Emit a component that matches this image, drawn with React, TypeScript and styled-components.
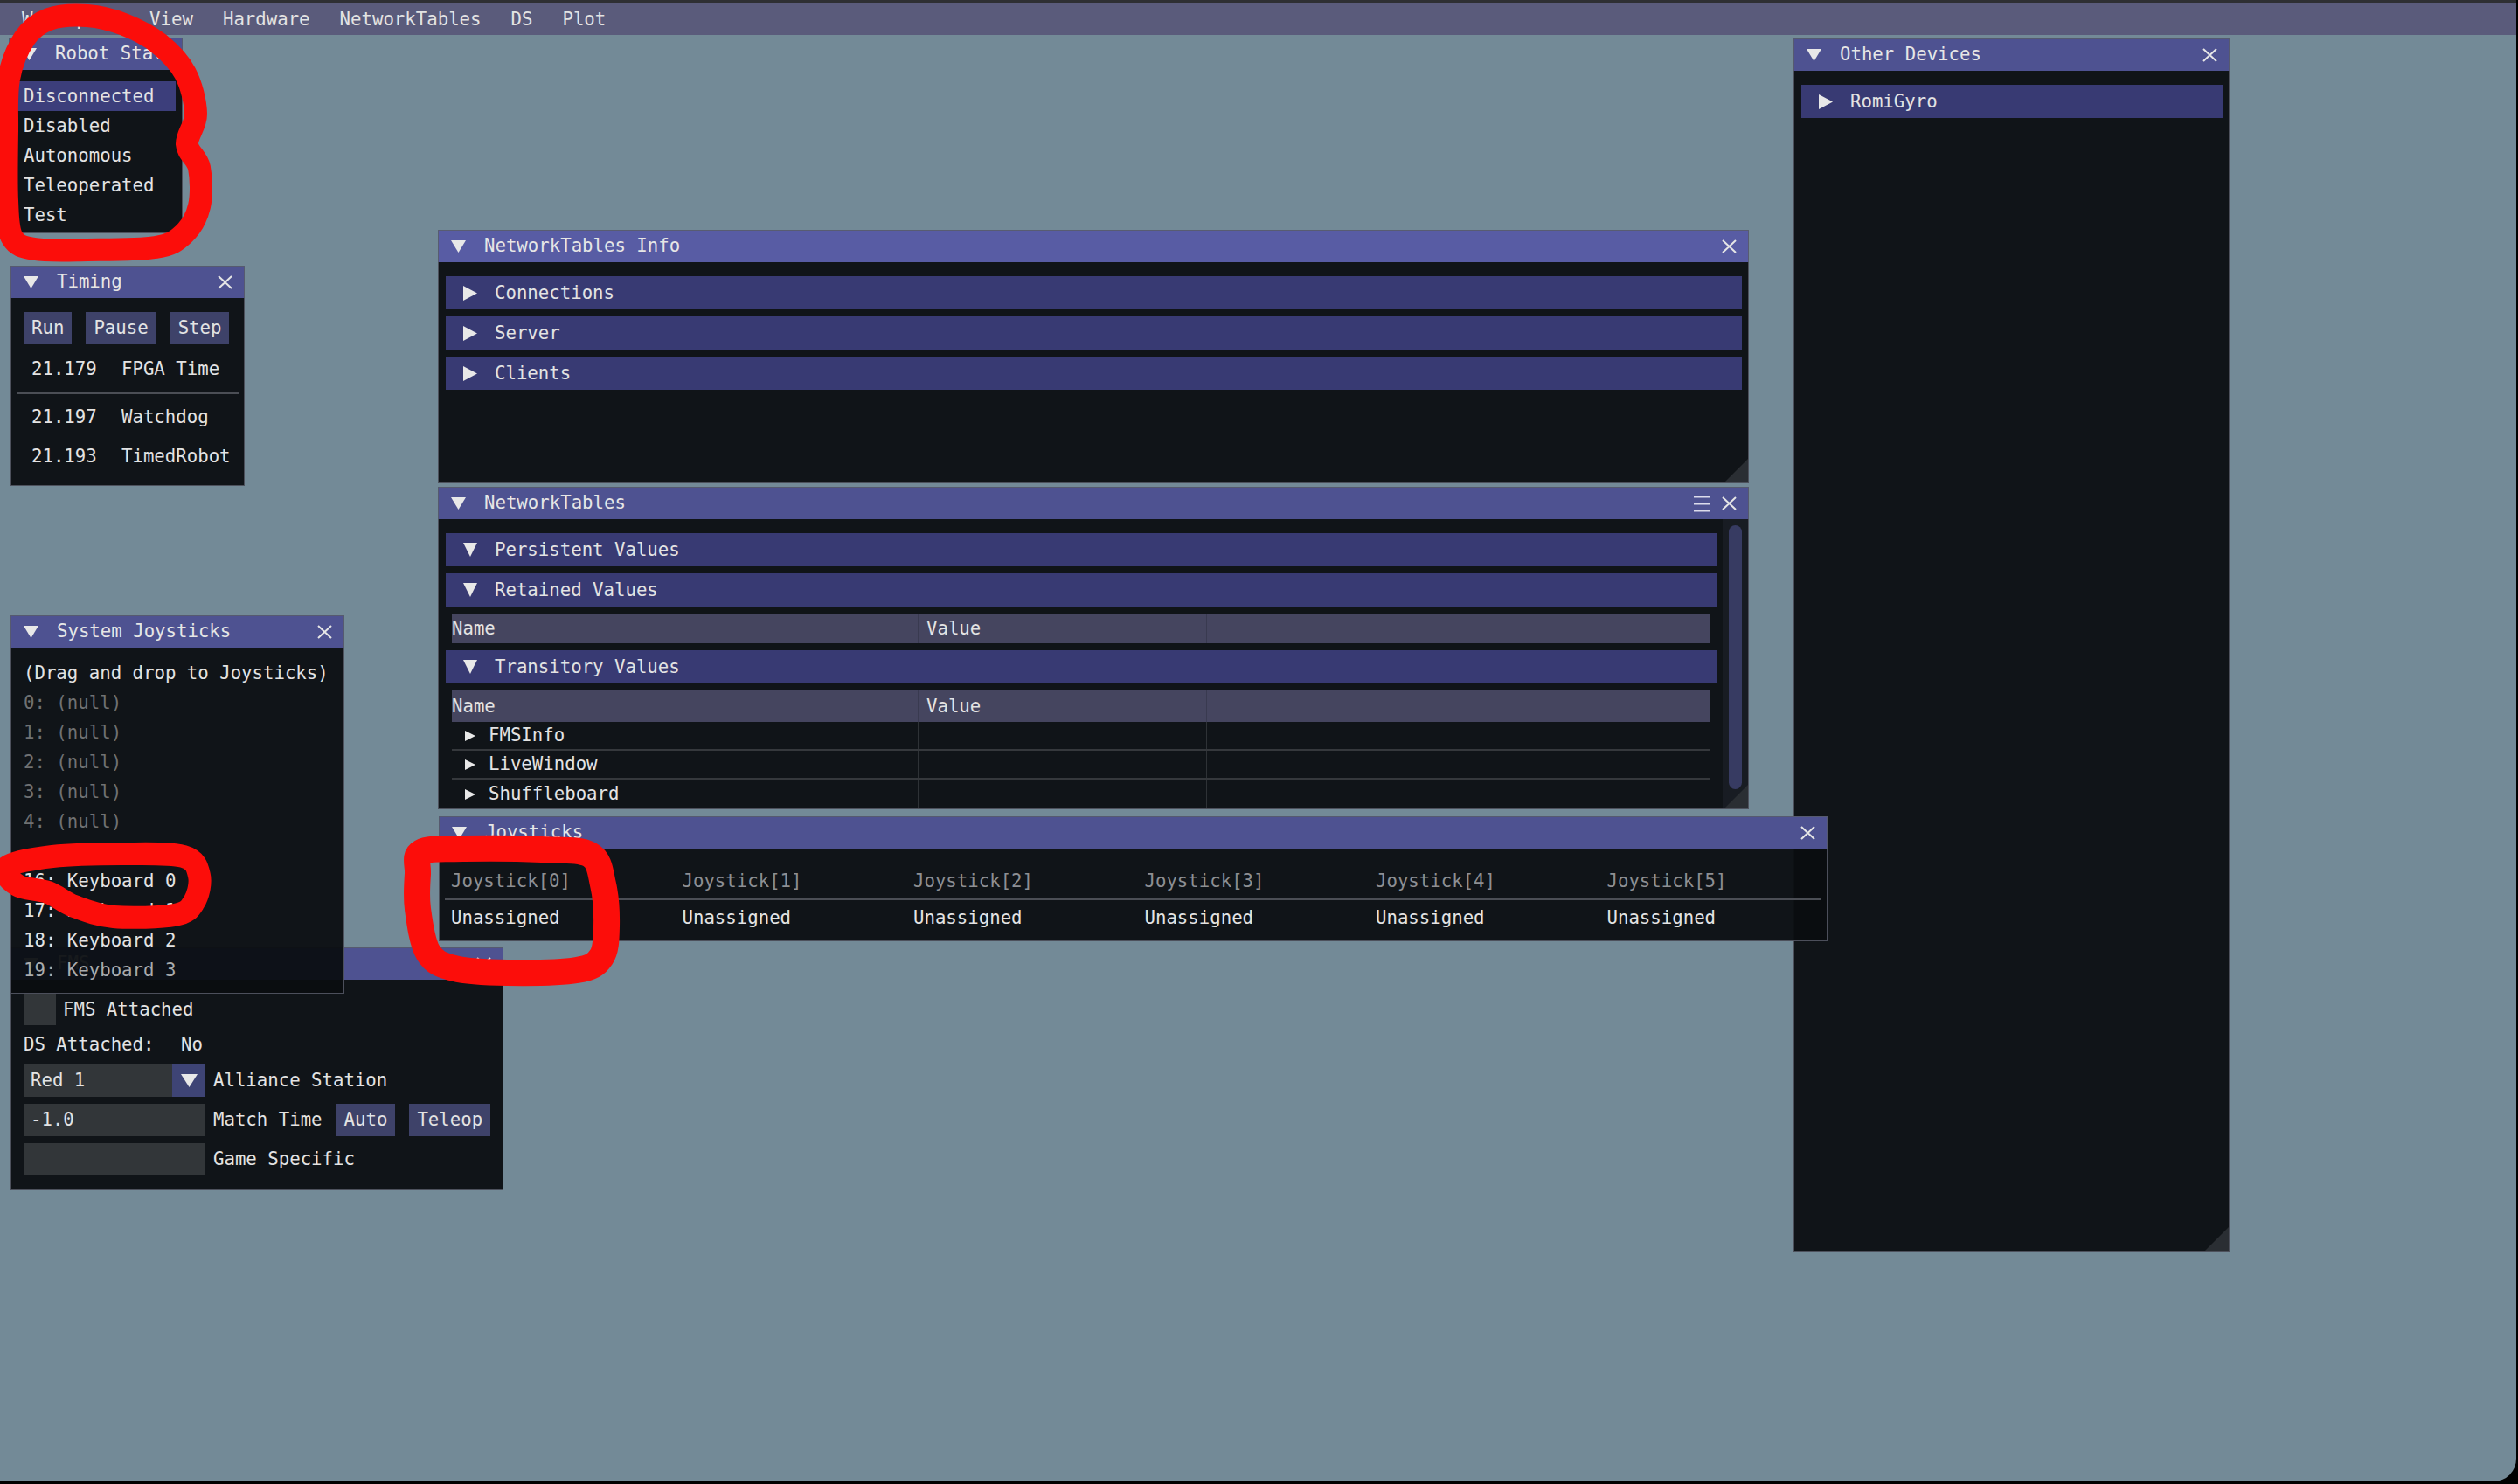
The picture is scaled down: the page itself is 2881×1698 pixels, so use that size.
import React from "react";
import styled, { createGlobalStyle, css } from "styled-components";

const GlobalStyle = createGlobalStyle`
  *, *::before, *::after { box-sizing: border-box; }
  html, body { margin: 0; padding: 0; background: #000; }
  body { font-family: "DejaVu Sans Mono", "Liberation Mono", monospace; }
`;

const TEXT = "#e3e3e3";
const DIM = "#6f7173";

const Screen = styled.div`
  position: relative;
  width: 2879px;
  height: 1695px;
  background: #738a97;
  border-bottom-right-radius: 26px;
  overflow: hidden;
  font-family: "DejaVu Sans Mono", "Liberation Mono", monospace;
  font-size: 20.7px;
  line-height: 1.2;
  color: ${TEXT};
  display: flex;
  flex-direction: column;
`;

const TopStrip = styled.div`
  height: 4px;
  flex: none;
  background: #2e2f33;
`;

const MenuBar = styled.div`
  height: 36px;
  flex: none;
  background: #5a5b7b;
  display: flex;
  align-items: center;
  padding-left: 8px;
`;

const MenuItem = styled.span`
  padding: 0 17px;
  white-space: nowrap;
`;

const Win = styled.div<{ $x: number; $y: number; $w: number; $h: number; $z?: number }>`
  position: absolute;
  left: ${(p) => p.$x}px;
  top: ${(p) => p.$y}px;
  width: ${(p) => p.$w}px;
  height: ${(p) => p.$h}px;
  z-index: ${(p) => p.$z ?? 1};
  background: rgba(10, 13, 16, 0.94);
  display: flex;
  flex-direction: column;
  overflow: hidden;
  &::after {
    content: "";
    position: absolute;
    inset: 0;
    border: 1px solid rgba(88, 92, 104, 0.85);
    pointer-events: none;
  }
`;

const TitleBar = styled.div<{ $active?: boolean }>`
  height: 37px;
  flex: none;
  background: ${(p) => (p.$active ? "#585ca4" : "#4e5291")};
  display: flex;
  align-items: center;
  padding: 0 14px 0 15px;
  color: #e6e6e6;
`;

const TitleText = styled.span<{ $clip?: number }>`
  margin-left: 21px;
  flex: 1;
  line-height: 37px;
  white-space: nowrap;
  overflow: hidden;
  ${(p) =>
    p.$clip &&
    css`
      flex: none;
      width: ${p.$clip}px;
    `}
`;

const TitleIcons = styled.div`
  display: flex;
  align-items: center;
  gap: 14px;
`;

const Grip = styled.div`
  position: absolute;
  right: 1px;
  bottom: 1px;
  width: 27px;
  height: 27px;
  background: #2a2e33;
  clip-path: polygon(100% 0, 100% 100%, 0 100%);
  z-index: 2;
`;

/* ---------- icons ---------- */
const TriDown = ({ w = 17, h = 14 }: { w?: number; h?: number }) => (
  <svg width={w} height={h} viewBox={`0 0 ${w} ${h}`} style={{ flex: "none" }}>
    <polygon points={`0,0 ${w},0 ${w / 2},${h}`} fill="#e8e8e8" />
  </svg>
);

const TriRight = ({ w = 16, h = 17 }: { w?: number; h?: number }) => (
  <svg width={w} height={h} viewBox={`0 0 ${w} ${h}`} style={{ flex: "none" }}>
    <polygon points={`0,0 ${w},${h / 2} 0,${h}`} fill="#e8e8e8" />
  </svg>
);

const CloseIcon = () => (
  <svg width="17" height="16" viewBox="0 0 17 16" style={{ flex: "none" }}>
    <path d="M1 1 L16 15 M16 1 L1 15" stroke="#e6e6e6" strokeWidth="2" fill="none" />
  </svg>
);

const MenuIcon = () => (
  <svg width="18" height="20" viewBox="0 0 18 20" style={{ flex: "none" }}>
    <rect x="0" y="1" width="18" height="2.5" fill="#dcdcec" />
    <rect x="0" y="9" width="18" height="2.5" fill="#dcdcec" />
    <rect x="0" y="17" width="18" height="2.5" fill="#dcdcec" />
  </svg>
);

/* ---------- shared widgets ---------- */
const Header = styled.div<{ $mt?: number }>`
  height: 38px;
  flex: none;
  background: #383a73;
  display: flex;
  align-items: center;
  padding-left: 20px;
  gap: 20px;
  white-space: nowrap;
  margin-top: ${(p) => p.$mt ?? 0}px;
`;

const Button = styled.div<{ $ml?: number }>`
  height: 37px;
  padding: 0 9px;
  background: #3e4269;
  display: flex;
  align-items: center;
  margin-left: ${(p) => p.$ml ?? 0}px;
  white-space: nowrap;
`;

/* ---------- lists ---------- */
const ListBody = styled.div<{ $pt: number; $pl: number; $pr?: number }>`
  padding: ${(p) => p.$pt}px ${(p) => p.$pr ?? 0}px 0 ${(p) => p.$pl}px;
  display: flex;
  flex-direction: column;
`;

const Selectable = styled.div<{ $selected?: boolean }>`
  height: 34px;
  flex: none;
  display: flex;
  align-items: center;
  padding-left: 9px;
  background: ${(p) => (p.$selected ? "#3c3e7b" : "transparent")};
  white-space: nowrap;
`;

/* ---------- Timing ---------- */
const TimingBody = styled.div`
  padding-top: 16px;
  display: flex;
  flex-direction: column;
`;

const ButtonRow = styled.div`
  display: flex;
  gap: 16px;
  padding-left: 15px;
`;

const StatRow = styled.div<{ $mt: number }>`
  height: 40px;
  flex: none;
  margin-top: ${(p) => p.$mt}px;
  padding-left: 24px;
  display: grid;
  grid-template-columns: 103px auto;
  align-items: center;
  white-space: nowrap;
`;

const Separator = styled.div<{ $mx: number; $mt: number }>`
  height: 2px;
  margin: ${(p) => p.$mt}px ${(p) => p.$mx}px 0;
  background: #4b4e55;
  flex: none;
`;

/* ---------- System Joysticks ---------- */
const TextRow = styled.div<{ $tone?: "dim" | "fade" }>`
  height: 34px;
  flex: none;
  display: flex;
  align-items: center;
  white-space: nowrap;
  color: ${(p) => (p.$tone === "dim" ? DIM : p.$tone === "fade" ? "#a9abad" : TEXT)};
`;

/* ---------- FMS ---------- */
const FormRow = styled.div<{ $mt?: number; $h?: number }>`
  display: flex;
  align-items: center;
  flex: none;
  height: ${(p) => p.$h ?? 37}px;
  margin-top: ${(p) => p.$mt ?? 0}px;
  white-space: nowrap;
`;

const Checkbox = styled.div`
  width: 37px;
  height: 36px;
  background: #323639;
  flex: none;
`;

const Field = styled.div<{ $w: number }>`
  width: ${(p) => p.$w}px;
  height: 37px;
  background: #323639;
  display: flex;
  align-items: center;
  padding-left: 8px;
  flex: none;
`;

const ComboArrow = styled.div`
  width: 38px;
  height: 37px;
  background: #3e4475;
  display: flex;
  align-items: center;
  justify-content: center;
  flex: none;
`;

const FieldLabel = styled.span<{ $w?: number; $ml?: number }>`
  margin-left: ${(p) => p.$ml ?? 9}px;
  ${(p) =>
    p.$w &&
    css`
      width: ${p.$w}px;
    `}
`;

/* ---------- NetworkTables ---------- */
const HeaderStack = styled.div<{ $pt: number; $pl: number; $pr: number }>`
  padding: ${(p) => p.$pt}px ${(p) => p.$pr}px 0 ${(p) => p.$pl}px;
  display: flex;
  flex-direction: column;
  gap: 8px;
`;

const NtBody = styled.div`
  flex: 1;
  display: flex;
  min-height: 0;
`;

const NtContent = styled.div`
  flex: 1;
  min-width: 0;
  padding: 16px 6px 0 9px;
  display: flex;
  flex-direction: column;
  overflow: hidden;
`;

const ScrollTrack = styled.div`
  width: 30px;
  flex: none;
  background: #181c23;
  padding: 7px 8px 23px 7px;
  display: flex;
`;

const ScrollGrab = styled.div`
  flex: 1;
  background: #373b62;
  border-radius: 8px;
`;

const Table = styled.div<{ $mt: number }>`
  margin: ${(p) => p.$mt}px 8px 0 7px;
  display: flex;
  flex-direction: column;
  flex: none;
`;

const COLS = "533px 330px 1fr";

const TableHead = styled.div<{ $h: number }>`
  display: grid;
  grid-template-columns: ${COLS};
  height: ${(p) => p.$h}px;
  background: #45455f;
`;

const HeadCell = styled.div<{ $first?: boolean }>`
  display: flex;
  align-items: center;
  padding-left: ${(p) => (p.$first ? 0 : 9)}px;
  border-left: ${(p) => (p.$first ? "none" : "1px solid #393a50")};
`;

const TableRow = styled.div<{ $last?: boolean }>`
  display: grid;
  grid-template-columns: ${COLS};
  height: 33px;
  border-bottom: ${(p) => (p.$last ? "none" : "2px solid #35383c")};
`;

const Cell = styled.div<{ $first?: boolean }>`
  display: flex;
  align-items: center;
  gap: 15px;
  padding-left: ${(p) => (p.$first ? 15 : 0)}px;
  border-left: ${(p) => (p.$first ? "none" : "1px solid #2e3236")};
  white-space: nowrap;
`;

/* ---------- Joysticks ---------- */
const JoyBody = styled.div`
  padding: 20px 7px 0;
  display: flex;
  flex-direction: column;
`;

const JoyGrid = styled.div<{ $dim?: boolean; $mt?: number }>`
  display: grid;
  grid-template-columns: repeat(5, 264.5px) 1fr;
  height: 34px;
  align-items: center;
  padding-left: 7px;
  margin-top: ${(p) => p.$mt ?? 0}px;
  color: ${(p) => (p.$dim ? "#8d8f93" : TEXT)};
  white-space: nowrap;
`;

/* ---------- Annotation overlay ---------- */
const Overlay = styled.svg`
  position: absolute;
  left: 0;
  top: 0;
  z-index: 20;
  pointer-events: none;
`;

type Pt = [number, number];
function smoothClosed(pts: Pt[]): string {
  const n = pts.length;
  let d = `M ${pts[0][0]} ${pts[0][1]}`;
  for (let i = 0; i < n; i++) {
    const p0 = pts[(i - 1 + n) % n];
    const p1 = pts[i];
    const p2 = pts[(i + 1) % n];
    const p3 = pts[(i + 2) % n];
    const c1x = p1[0] + (p2[0] - p0[0]) / 6;
    const c1y = p1[1] + (p2[1] - p0[1]) / 6;
    const c2x = p2[0] - (p3[0] - p1[0]) / 6;
    const c2y = p2[1] - (p3[1] - p1[1]) / 6;
    d += ` C ${c1x} ${c1y} ${c2x} ${c2y} ${p2[0]} ${p2[1]}`;
  }
  return d + " Z";
}

const loop1: Pt[] = [
  [28, 44], [56, 22], [100, 18], [142, 28], [182, 50], [212, 84], [224, 130], [214, 165],
  [228, 192], [228, 236], [210, 268], [178, 283], [100, 286], [40, 285], [14, 272],
  [8, 230], [8, 150], [10, 90],
];
const loop2: Pt[] = [
  [8, 992], [60, 980], [140, 977], [210, 980], [228, 1002], [222, 1032], [200, 1047],
  [130, 1049], [85, 1037], [55, 1021], [20, 1013],
];
const loop3: Pt[] = [
  [482, 975], [530, 971], [620, 972], [675, 978], [690, 1012], [694, 1060], [688, 1095],
  [660, 1110], [580, 1113], [520, 1108], [490, 1090], [478, 1040], [478, 1000],
];

const nullRows = ["0: (null)", "1: (null)", "2: (null)", "3: (null)", "4: (null)"];
const kbRows = ["16: Keyboard 0", "17: Keyboard 1", "18: Keyboard 2"];
const robotStates = ["Disconnected", "Disabled", "Autonomous", "Teleoperated", "Test"];
const ntRows = ["FMSInfo", "LiveWindow", "Shuffleboard"];
const joyIdx = [0, 1, 2, 3, 4, 5];

export default function App() {
  return (
    <>
      <GlobalStyle />
      <Screen>
        <TopStrip />
        <MenuBar>
          <MenuItem>Workspace</MenuItem>
          <MenuItem>View</MenuItem>
          <MenuItem>Hardware</MenuItem>
          <MenuItem>NetworkTables</MenuItem>
          <MenuItem>DS</MenuItem>
          <MenuItem>Plot</MenuItem>
        </MenuBar>

        {/* Robot State */}
        <Win $x={10} $y={43} $w={199} $h={224}>
          <TitleBar>
            <TriDown />
            <TitleText $clip={125}>Robot State</TitleText>
          </TitleBar>
          <ListBody $pt={13} $pl={8} $pr={8}>
            {robotStates.map((s, i) => (
              <Selectable key={s} $selected={i === 0}>
                {s}
              </Selectable>
            ))}
          </ListBody>
        </Win>

        {/* Timing */}
        <Win $x={12} $y={304} $w={268} $h={252}>
          <TitleBar>
            <TriDown />
            <TitleText>Timing</TitleText>
            <TitleIcons>
              <CloseIcon />
            </TitleIcons>
          </TitleBar>
          <TimingBody>
            <ButtonRow>
              <Button>Run</Button>
              <Button>Pause</Button>
              <Button>Step</Button>
            </ButtonRow>
            <StatRow $mt={8}>
              <span>21.179</span>
              <span>FPGA Time</span>
            </StatRow>
            <Separator $mx={7} $mt={7} />
            <StatRow $mt={6}>
              <span>21.197</span>
              <span>Watchdog</span>
            </StatRow>
            <StatRow $mt={5}>
              <span>21.193</span>
              <span>TimedRobot</span>
            </StatRow>
          </TimingBody>
        </Win>

        {/* FMS */}
        <Win $x={12} $y={1084} $w={564} $h={278} $z={2}>
          <TitleBar>
            <TriDown />
            <TitleText>FMS</TitleText>
            <TitleIcons>
              <CloseIcon />
            </TitleIcons>
          </TitleBar>
          <ListBody $pt={16} $pl={15}>
            <FormRow $h={36}>
              <Checkbox />
              <FieldLabel $ml={8}>FMS Attached</FieldLabel>
            </FormRow>
            <FormRow $mt={4}>
              <FieldLabel $ml={0} $w={180}>
                DS Attached:
              </FieldLabel>
              <span>No</span>
            </FormRow>
            <FormRow $mt={4}>
              <Field $w={170}>Red 1</Field>
              <ComboArrow>
                <TriDown w={19} h={15} />
              </ComboArrow>
              <FieldLabel>Alliance Station</FieldLabel>
            </FormRow>
            <FormRow $mt={8}>
              <Field $w={208}>-1.0</Field>
              <FieldLabel>Match Time</FieldLabel>
              <Button $ml={16}>Auto</Button>
              <Button $ml={16}>Teleop</Button>
            </FormRow>
            <FormRow $mt={8}>
              <Field $w={208} />
              <FieldLabel>Game Specific</FieldLabel>
            </FormRow>
          </ListBody>
        </Win>

        {/* System Joysticks */}
        <Win $x={12} $y={704} $w={382} $h={433} $z={3}>
          <TitleBar>
            <TriDown />
            <TitleText>System Joysticks</TitleText>
            <TitleIcons>
              <CloseIcon />
            </TitleIcons>
          </TitleBar>
          <ListBody $pt={12} $pl={15}>
            <TextRow>(Drag and drop to Joysticks)</TextRow>
            {nullRows.map((r) => (
              <TextRow key={r} $tone="dim">
                {r}
              </TextRow>
            ))}
            <TextRow />
            {kbRows.map((r) => (
              <TextRow key={r}>{r}</TextRow>
            ))}
            <TextRow $tone="fade">19: Keyboard 3</TextRow>
          </ListBody>
        </Win>

        {/* NetworkTables Info */}
        <Win $x={501} $y={263} $w={1500} $h={290}>
          <TitleBar $active>
            <TriDown />
            <TitleText>NetworkTables Info</TitleText>
            <TitleIcons>
              <CloseIcon />
            </TitleIcons>
          </TitleBar>
          <HeaderStack $pt={16} $pl={9} $pr={8}>
            <Header>
              <TriRight />
              Connections
            </Header>
            <Header>
              <TriRight />
              Server
            </Header>
            <Header>
              <TriRight />
              Clients
            </Header>
          </HeaderStack>
          <Grip />
        </Win>

        {/* NetworkTables */}
        <Win $x={501} $y={557} $w={1500} $h={369}>
          <TitleBar>
            <TriDown />
            <TitleText>NetworkTables</TitleText>
            <TitleIcons>
              <MenuIcon />
              <CloseIcon />
            </TitleIcons>
          </TitleBar>
          <NtBody>
            <NtContent>
              <Header>
                <TriDown w={16} h={16} />
                Persistent Values
              </Header>
              <Header $mt={8}>
                <TriDown w={16} h={16} />
                Retained Values
              </Header>
              <Table $mt={8}>
                <TableHead $h={34}>
                  <HeadCell $first>Name</HeadCell>
                  <HeadCell>Value</HeadCell>
                  <HeadCell />
                </TableHead>
              </Table>
              <Header $mt={8}>
                <TriDown w={16} h={16} />
                Transitory Values
              </Header>
              <Table $mt={8}>
                <TableHead $h={36}>
                  <HeadCell $first>Name</HeadCell>
                  <HeadCell>Value</HeadCell>
                  <HeadCell />
                </TableHead>
                {ntRows.map((r, i) => (
                  <TableRow key={r} $last={i === ntRows.length - 1}>
                    <Cell $first>
                      <TriRight w={12} h={12} />
                      {r}
                    </Cell>
                    <Cell />
                    <Cell />
                  </TableRow>
                ))}
              </Table>
            </NtContent>
            <ScrollTrack>
              <ScrollGrab />
            </ScrollTrack>
          </NtBody>
          <Grip />
        </Win>

        {/* Other Devices */}
        <Win $x={2052} $y={44} $w={499} $h={1388} $z={1}>
          <TitleBar>
            <TriDown />
            <TitleText>Other Devices</TitleText>
            <TitleIcons>
              <CloseIcon />
            </TitleIcons>
          </TitleBar>
          <HeaderStack $pt={16} $pl={9} $pr={8}>
            <Header>
              <TriRight />
              RomiGyro
            </Header>
          </HeaderStack>
          <Grip />
        </Win>

        {/* Joysticks */}
        <Win $x={502} $y={934} $w={1589} $h={143} $z={3}>
          <TitleBar>
            <TriDown />
            <TitleText>Joysticks</TitleText>
            <TitleIcons>
              <CloseIcon />
            </TitleIcons>
          </TitleBar>
          <JoyBody>
            <JoyGrid $dim>
              {joyIdx.map((i) => (
                <span key={i}>Joystick[{i}]</span>
              ))}
            </JoyGrid>
            <Separator $mx={0} $mt={3} />
            <JoyGrid $mt={3}>
              {joyIdx.map((i) => (
                <span key={i}>Unassigned</span>
              ))}
            </JoyGrid>
          </JoyBody>
        </Win>

        <Overlay width={2879} height={1695} viewBox="0 0 2879 1695">
          {[loop1, loop2, loop3].map((l, i) => (
            <path
              key={i}
              d={smoothClosed(l)}
              fill="none"
              stroke="#fc0d0a"
              strokeWidth={i === 2 ? 30 : 26}
              strokeLinecap="round"
              strokeLinejoin="round"
            />
          ))}
        </Overlay>
      </Screen>
    </>
  );
}
